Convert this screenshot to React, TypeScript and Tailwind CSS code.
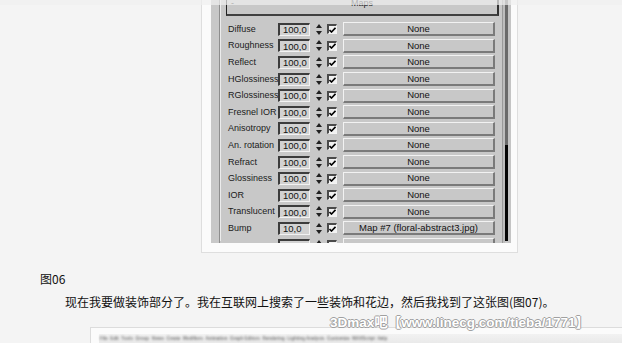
import React from "react";

const rows = [
  "Diffuse",
  "Roughness",
  "Reflect",
  "HGlossiness",
  "RGlossiness",
  "Fresnel IOR",
  "Anisotropy",
  "An. rotation",
  "Refract",
  "Glossiness",
  "IOR",
  "Translucent",
  "Bump",
  "",
];

function Spinner() {
  return (
    <div className="ml-[6px] flex h-[11px] w-[6px] flex-col items-center justify-between">
      <svg width="6" height="4" viewBox="0 0 6 4">
        <polygon points="3,0 6,4 0,4" fill="#202020" />
      </svg>
      <svg width="6" height="4" viewBox="0 0 6 4">
        <polygon points="0,0 6,0 3,4" fill="#202020" />
      </svg>
    </div>
  );
}

function Check() {
  return (
    <div className="ml-[5px] flex h-[10px] w-[10px] items-center justify-center border-t-[2px] border-l-[2px] border-r border-b border-t-[#4a4a4a] border-l-[#4a4a4a] border-r-[#f4f4f4] border-b-[#f4f4f4] bg-[#f2f2f2]">
      <svg width="7" height="6" viewBox="0 0 7 6">
        <path d="M0.5 3 L2.5 5 L6.5 0.8" stroke="#000" strokeWidth="1.6" fill="none" />
      </svg>
    </div>
  );
}

function Row({ label, idx }: { label: string; idx: number }) {
  const value = label === "Bump" ? "10,0" : "100,0";
  const btn = label === "Bump" ? "Map #7 (floral-abstract3.jpg)" : "None";
  return (
    <div className="flex h-[16.6px] shrink-0 items-center">
      <div className="ml-[7px] w-[50px] whitespace-nowrap text-[9px] leading-none text-[#1a1a1a]">
        {label}
      </div>
      <div className="flex h-[13px] w-[32px] items-center border-t-[2px] border-l-[2px] border-r border-b border-t-[#3c3c3c] border-l-[#3c3c3c] border-r-[#f2f2f2] border-b-[#f2f2f2] bg-[#d2d2d2] pl-[3px] text-[9.5px] leading-none text-[#111]">
        {idx < 13 ? value : ""}
      </div>
      <Spinner />
      <Check />
      <div className="ml-[6px] flex h-[14px] w-[152px] items-center justify-center border-t border-l border-r-[2px] border-b-[2px] border-t-[#f2f2f2] border-l-[#f2f2f2] border-r-[#7a7a7a] border-b-[#7a7a7a] bg-[#c8c8c8] text-[9.5px] leading-none text-[#111]">
        {idx < 13 ? btn : ""}
      </div>
    </div>
  );
}

export default function App() {
  return (
    <div
      className="relative h-[343px] w-[622px] overflow-hidden bg-[#f4f4f4]"
      style={{ fontFamily: '"Liberation Sans", Arial, "Noto Sans CJK SC", sans-serif' }}
    >
      {/* Upper image frame */}
      <div className="ml-[201px] h-[253px] w-[317px] border-x border-b border-[#dedede] bg-[#fbfbfb] pl-[9px]">
        <div className="flex h-[243px] w-[300px] overflow-hidden bg-[#c8c8c8]">
          <div className="w-[8px] shrink-0" />
          <div className="w-[1px] shrink-0 bg-[#8e8e8e]" />
          <div className="h-[241px] w-[1px] shrink-0 bg-[#ececec]" />
          <div className="flex w-[279px] shrink-0 flex-col">
            <div className="ml-[5px] mt-[-5px] flex h-[21px] w-[273px] shrink-0 items-start border-l border-r-[2px] border-b-[2px] border-t border-l-[#202020] border-r-[#303030] border-b-[#404040] border-t-[#f2f2f2] bg-[#c8c8c8] pt-[1px] text-[9px] text-[#222]">
              <span className="ml-[4px] w-[10px]">-</span>
              <span className="flex-1 pr-[14px] text-center">Maps</span>
            </div>
            <div className="mt-[5px] flex flex-col">
              {rows.map((r, i) => (
                <Row key={i} label={r} idx={i} />
              ))}
            </div>
          </div>
          <div className="w-[2px] shrink-0" />
          <div className="w-[1px] shrink-0 bg-[#9a9a9a]" />
          <div className="w-[2px] shrink-0 bg-[#bdbdbd]" />
          <div className="flex h-[241px] w-[3px] shrink-0 flex-col">
            <div className="flex-1 bg-[#6a6a6a]" />
            <div className="h-[96px] bg-[#050505]" />
          </div>
          <div className="w-[3px] shrink-0 bg-[#c4c4c4]" />
        </div>
      </div>

      {/* Text */}
      <div
        className="mt-[18px] pl-[40px] text-[12px] leading-[16px] text-[#111]"
        style={{ fontFamily: '"Noto Sans CJK SC", "Liberation Sans", sans-serif' }}
      >
        图06
      </div>
      <div
        className="mt-[7px] whitespace-nowrap pl-[65px] text-[12px] leading-[16px] text-[#111]"
        style={{ fontFamily: '"Noto Sans CJK SC", "Liberation Sans", sans-serif' }}
      >
        现在我要做装饰部分了。我在互联网上搜索了一些装饰和花边，然后我找到了这张图(图07)。
      </div>

      {/* Lower image frame */}
      <div className="ml-[90px] mt-[17px] h-[40px] border-t border-l border-[#dcdcdc] bg-[#fbfbfb] pl-[8px] pt-[6px]">
        <div className="h-[30px] bg-gradient-to-b from-[#f2f2f2] via-[#e4e4e4] to-[#d8d8d8]">
          <div className="whitespace-nowrap pl-[1px] pt-[1px] text-[4.5px] font-bold leading-[7px] text-[#7a7a7a] blur-[0.8px]">
            File&nbsp; Edit&nbsp; Tools&nbsp; Group&nbsp; Views&nbsp; Create&nbsp; Modifiers&nbsp; Animation&nbsp; Graph Editors&nbsp; Rendering&nbsp; Lighting Analysis&nbsp; Customize&nbsp; MAXScript&nbsp; Help
          </div>
        </div>
      </div>

      {/* Top light band overlay */}
      <div className="absolute left-0 top-0 h-[5px] w-full bg-[#f0f0f0]/70" />

      {/* Watermark */}
      <div
        className="absolute left-[330px] top-[314px] whitespace-nowrap text-[13.5px] font-bold leading-[18px] text-white [text-shadow:-1px_0_#a0a0a0,1px_0_#a0a0a0,0_-1px_#a0a0a0,0_1px_#a0a0a0]"
        style={{ fontFamily: '"Liberation Sans", "Noto Sans CJK SC", sans-serif' }}
      >
        3Dmax吧【www.linecg.com/tieba/1771】
      </div>
    </div>
  );
}
